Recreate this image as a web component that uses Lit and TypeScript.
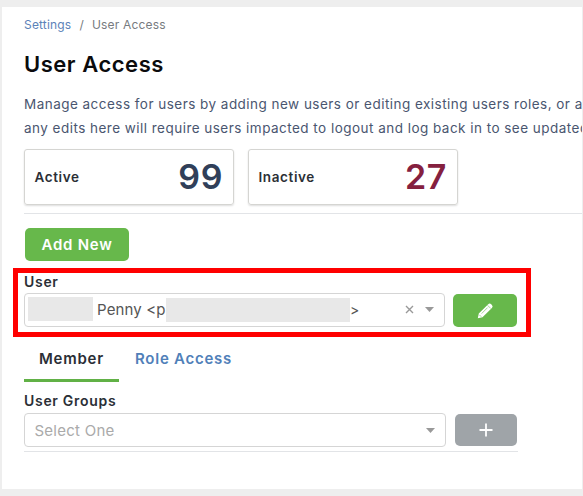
import { LitElement, html, css } from "lit";
import { customElement } from "lit/decorators.js";

@customElement("app-root")
export class AppRoot extends LitElement {
  static styles = css`
    :host { display: block; height: 496px; box-sizing: border-box; padding: 7px 1px 7px 2px; background: #eee;
      font-family: Inter, "Liberation Sans", sans-serif; overflow: hidden; color: #2b2f36; }
    * { box-sizing: border-box; }
    .panel { height: 482px; background: #fff; padding-left: 22px; overflow: hidden; display: flex; flex-direction: column; align-items: flex-start; white-space: nowrap; }
    .panel > * { flex: none; }
    .crumbs { display: flex; margin-top: 10px; height: 16px; line-height: 16px; font-size: 12px; letter-spacing: 0.18px; color: #777b80; }
    .crumbs a { color: #5c82b8; }
    .sep { width: 20.5px; text-align: center; }
    h1 { margin: 17px 0 0; height: 28px; line-height: 28px; font-size: 22px; font-weight: 600; letter-spacing: 0.53px; color: #0b0b0d; }
    .intro { margin: 14px 0 0; line-height: 24px; height: 48px; font-size: 13.5px; letter-spacing: 0.47px; color: #4a5670; }
    .cards { display: flex; gap: 14px; margin-top: 9px; }
    .card { width: 210px; height: 56px; border: 1px solid #d5d5d2; border-radius: 3px; box-shadow: 0 1px 2px #0002; display: flex; align-items: center; justify-content: space-between; padding: 0 10px 0 9.5px; font-size: 13.5px; font-weight: 600; letter-spacing: 0.6px; }
    .num { font-size: 34px; line-height: 40px; letter-spacing: 0.6px; color: #303f59; }
    .num.off { color: #85203f; }
    .rule { width: 560px; height: 1px; background: #e2e4e7; margin-top: 8px; }
    .add { margin: 14px 0 0 1px; width: 104px; height: 33px; border-radius: 5px; background: #67b84b; color: #fff; font-size: 15px; font-weight: 600; letter-spacing: 0.75px; display: flex; align-items: center; justify-content: center; }
    .focus { margin: 7px 0 0 -11px; width: 518px; height: 69px; border: 5px solid #f00; padding: 0 0 0 6px; }
    .label { height: 18px; line-height: 18px; font-size: 14px; font-weight: 600; letter-spacing: 0.7px; }
    .row { display: flex; align-items: center; }
    .ur { margin-top: 2px; }
    .select { height: 34px; width: 421px; border: 1px solid #d5d5d5; border-radius: 4px; display: flex; align-items: center; font-size: 15px; letter-spacing: 0.35px; color: #555; }
    .mask { background: #e8e8e8; height: 24px; flex: none; margin-bottom: 2px; }
    .m1 { width: 65px; margin-left: 3px; }
    .penny { width: 73px; padding-left: 4px; margin-bottom: 2px; letter-spacing: 0.15px; }
    .m2 { width: 184px; margin-bottom: 0; }
    .gt { font-size: 14px; margin-bottom: 2px; }
    .clear { margin-left: auto; margin-bottom: 2px; }
    .arrow { margin: 0 10px 0 11px; }
    .clear + .arrow { margin-bottom: 1px; }
    .arrow.end { margin-left: auto; }
    .btn { width: 64px; height: 33px; border-radius: 5px; background: #67b84b; display: flex; align-items: center; justify-content: center; margin-left: 8px; }
    .btn.gray { width: 62px; height: 32px; background: #9fa4a8; margin-left: 9px; }
    .select.wide { width: 422px; }
    .placeholder { margin-left: 9.5px; color: #aaa; letter-spacing: 0.25px; }
    .tabs { display: flex; margin-top: 1px; height: 44px; font-size: 15px; font-weight: 600; letter-spacing: 0.75px; line-height: 41px; }
    .tab { color: #5080b9; padding-left: 16px; }
    .tab.on { width: 95px; padding-left: 15px; color: #2b2f36; border-bottom: 3px solid #61b146; }
    .groups { margin-top: 10px; }
    .gr { margin-top: 3px; }
    .rule.end { width: 494px; margin-top: 4px; }
    svg { display: block; flex: none; }
  `;
  private arrow(cls: string) {
    return html`<svg class="arrow ${cls}" width="9" height="5" viewBox="0 0 9 5"><path d="M0 0h9L4.5 5z" fill="#999"/></svg>`;
  }
  render() {
    return html`<main class="panel">
      <nav class="crumbs"><a>Settings</a><span class="sep">/</span><span>User Access</span></nav>
      <h1>User Access</h1>
      <p class="intro">Manage access for users by adding new users or editing existing users roles, or a<br>any edits here will require users impacted to logout and log back in to see updated</p>
      <div class="cards">
        <div class="card"><span>Active</span><span class="num">99</span></div>
        <div class="card"><span>Inactive</span><span class="num off">27</span></div>
      </div>
      <div class="rule"></div>
      <div class="add">Add New</div>
      <section class="focus">
        <div class="label">User</div>
        <div class="row ur">
          <div class="select"><span class="mask m1"></span><span class="penny">Penny &lt;p</span><span class="mask m2"></span><span class="gt">&gt;</span>
            <svg class="clear" width="9" height="9" viewBox="0 0 9 9"><path d="M1 1l7 7M8 1L1 8" stroke="#999" stroke-width="1.4"/></svg>
            ${this.arrow("")}</div>
          <div class="btn"><svg width="17" height="17" viewBox="0 0 17 17"><path fill="#fff" d="M.8 16.2L1.8 11.6 11.2 2.2q1.5-1.5 3 0l.7.7q1.5 1.5 0 3L5.5 15.2z"/><path d="M4.6 11.6L10.6 5.6M10.6 3.3l3.2 3.2M2.3 12.8l1.9 1.9" stroke="#67b84b" stroke-width=".6"/></svg></div>
        </div>
      </section>
      <div class="tabs"><span class="tab on">Member</span><span class="tab">Role Access</span></div>
      <div class="label groups">User Groups</div>
      <div class="row gr">
        <div class="select wide"><span class="placeholder">Select One</span>${this.arrow("end")}</div>
        <div class="btn gray"><svg width="14" height="14" viewBox="0 0 14 14"><path d="M7 .5v13M.5 7h13" stroke="#fff" stroke-width="1.8"/></svg></div>
      </div>
      <div class="rule end"></div>
    </main>`;
  }
}
